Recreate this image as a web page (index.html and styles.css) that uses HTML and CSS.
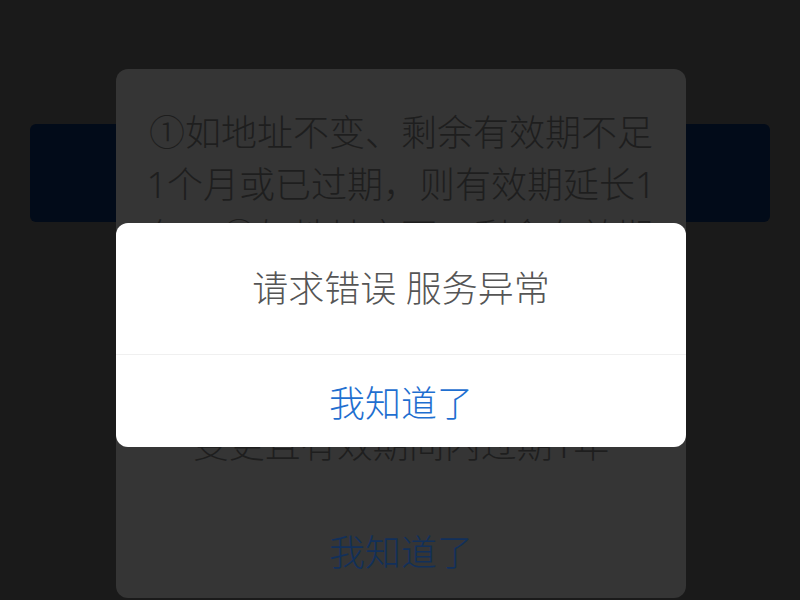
FILE: index.html
```html
<!DOCTYPE html>
<html lang="zh-CN">
<head>
<meta charset="utf-8">
<title>请求错误</title>
<link rel="stylesheet" href="styles.css">
</head>
<body>
<div class="screen">
  <div class="bar"></div>

  <div class="notice">
    <p class="notice-text">①如地址不变、剩余有效期不足<br>1个月或已过期，则有效期延长1<br>年；②如地址变更、剩余有效期<br>不足三个月，则有效期延长一年<br>③如地址变更且剩余有效期超过<br>一个月则有效期不变；④如地址<br>变更且有效期间内过期1年</p>
    <div class="notice-btn">我知道了</div>
  </div>

  <div class="alert">
    <div class="alert-title">请求错误 服务异常</div>
    <div class="alert-btn">我知道了</div>
  </div>
</div>
</body>
</html>
```

FILE: styles.css
```css
html, body {
  margin: 0;
  padding: 0;
  background: #1a1a1a;
}

.screen {
  position: relative;
  width: 800px;
  height: 600px;
  overflow: hidden;
  padding: 124px 30px 0;
  box-sizing: border-box;
  font-family: "Noto Sans", "Noto Sans CJK SC", sans-serif;
  font-weight: 300;
}

.bar {
  height: 98px;
  background: #020b19;
  border-radius: 6px;
}

.notice {
  position: absolute;
  left: 116px;
  top: 69px;
  width: 570px;
  height: 529px;
  background: #353535;
  border-radius: 12px;
  box-sizing: border-box;
  padding: 38px 20px 0;
  display: flex;
  flex-direction: column;
}

.notice-text {
  margin: 0;
  font-size: 36px;
  line-height: 52px;
  color: #1e1e1e;
  text-align: center;
  white-space: nowrap;
  height: 364px;
  overflow: hidden;
}

.notice-btn {
  margin-top: 56px;
  text-align: center;
  font-size: 36px;
  line-height: 52px;
  color: #12305a;
}

.alert {
  position: absolute;
  left: 116px;
  top: 223px;
  width: 570px;
  height: 224px;
  background: #ffffff;
  border-radius: 12px;
  display: flex;
  flex-direction: column;
  overflow: hidden;
}

.alert-title {
  height: 132px;
  display: flex;
  align-items: center;
  justify-content: center;
  font-size: 36px;
  color: #555555;
  border-bottom: 1px solid #f0f0f0;
  box-sizing: border-box;
  padding-bottom: 4px;
}

.alert-btn {
  flex: 1;
  display: flex;
  align-items: center;
  justify-content: center;
  font-size: 36px;
  color: #1f6fd0;
}
```
